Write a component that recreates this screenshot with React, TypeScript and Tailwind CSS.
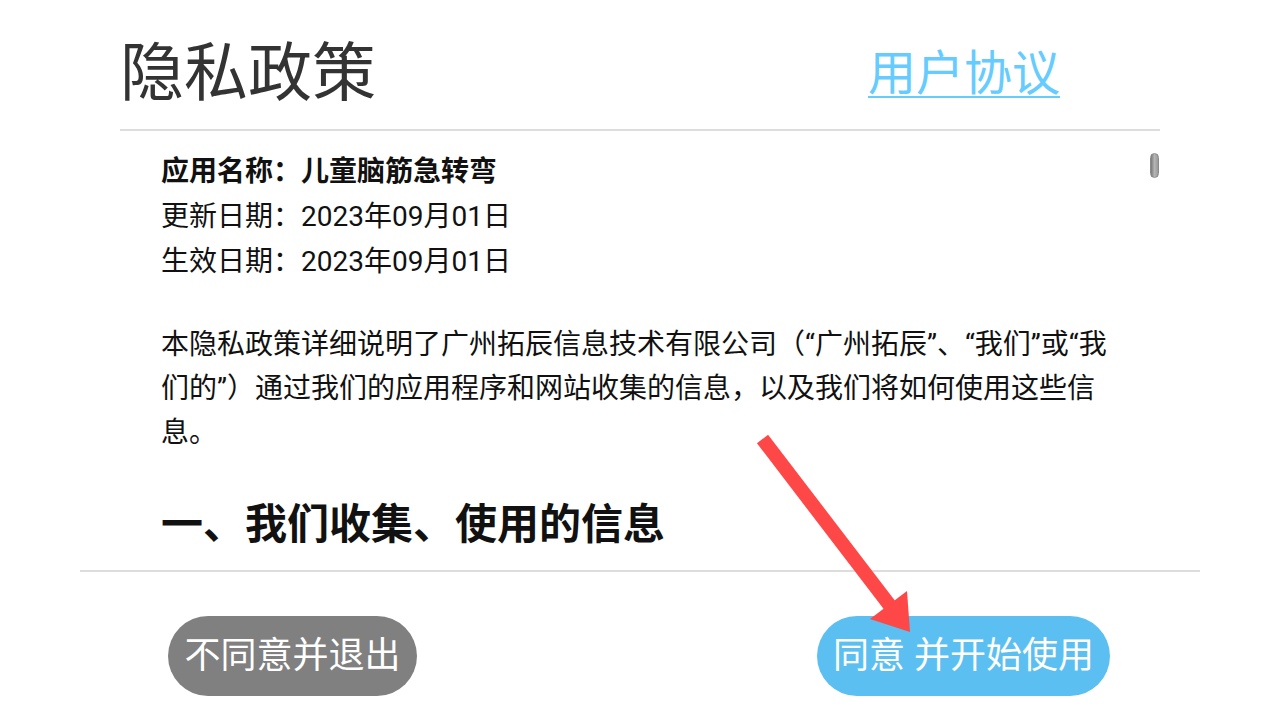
import React from "react";

export default function App() {
  return (
    <div
      className="relative w-[1280px] h-[720px] bg-white overflow-hidden"
      style={{ fontFamily: 'Roboto, "Noto Sans CJK SC", sans-serif' }}
    >
      {/* Header */}
      <div className="mx-[120px] h-[129px] pt-[19px] flex items-center justify-between">
        <h1 className="text-[64px] leading-none text-[#333333] font-normal">隐私政策</h1>
        <a className="mr-[100px] text-[48px] leading-none text-[#66ccff] underline decoration-2 underline-offset-[6px]">
          用户协议
        </a>
      </div>
      <div className="mx-[120px] h-[2px] bg-[#dddddd]" />

      {/* Scrollable content */}
      <div className="relative mx-[120px] h-[439px] overflow-hidden pl-[41px] pt-[18px]">
        <div className="w-[954px] text-[28px] text-[#111111]">
          <p className="leading-[45px] font-bold">应用名称：儿童脑筋急转弯</p>
          <p className="leading-[45px]">更新日期：2023年09月01日</p>
          <p className="leading-[45px]">生效日期：2023年09月01日</p>
          <p className="mt-[39px] leading-[44px]">
            本隐私政策详细说明了广州拓辰信息技术有限公司（“广州拓辰”、“我们”或“我们的”）通过我们的应用程序和网站收集的信息，以及我们将如何使用这些信息。
          </p>
          <h2 className="mt-[42px] text-[42px] leading-[56px] font-bold">一、我们收集、使用的信息</h2>
        </div>
        <div className="absolute right-[1px] top-[22px] w-[9px] h-[25px] rounded-full border border-[#8a8a8a] bg-gradient-to-r from-[#7a7a7a] via-[#b5b5b5] to-[#9a9a9a]" />
      </div>

      {/* Bottom */}
      <div className="mx-[80px] h-[2px] bg-[#dddddd]" />
      <div className="flex justify-between pl-[168px] pr-[170px] pt-[44px]">
        <button className="w-[249px] h-[80px] rounded-full bg-[#808080] text-white text-[36px] leading-none flex items-center justify-center">
          不同意并退出
        </button>
        <button className="w-[293px] h-[80px] rounded-full bg-[#5cbff1] text-white text-[36px] leading-none flex items-center justify-center">
          同意 并开始使用
        </button>
      </div>

      {/* Red arrow */}
      <svg
        className="absolute inset-0 pointer-events-none"
        width="1280"
        height="720"
        viewBox="0 0 1280 720"
      >
        <line x1="762.5" y1="439" x2="891" y2="607" stroke="#fe4848" strokeWidth="14" />
        <polygon points="870,619 907,591 910,632" fill="#fe4848" />
      </svg>
    </div>
  );
}
